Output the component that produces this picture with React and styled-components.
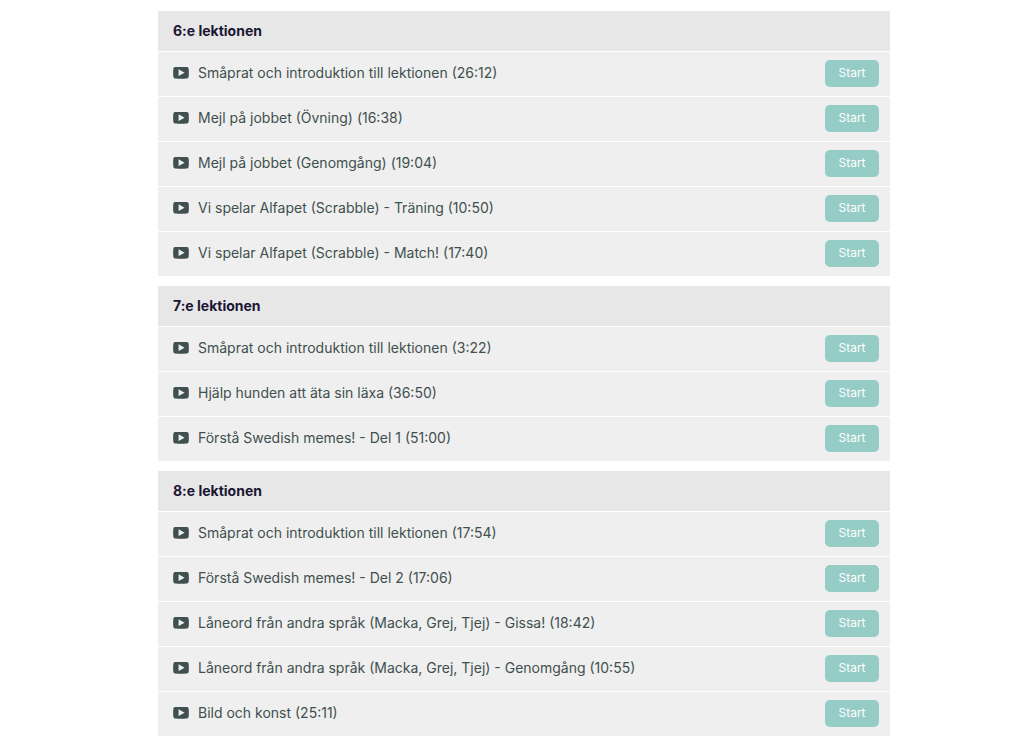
import styled, { createGlobalStyle } from 'styled-components';

const sections = [
  {
    title: '6:e lektionen',
    lectures: [
      'Småprat och introduktion till lektionen (26:12)',
      'Mejl på jobbet (Övning) (16:38)',
      'Mejl på jobbet (Genomgång) (19:04)',
      'Vi spelar Alfapet (Scrabble) - Träning (10:50)',
      'Vi spelar Alfapet (Scrabble) - Match! (17:40)',
    ],
  },
  {
    title: '7:e lektionen',
    lectures: [
      'Småprat och introduktion till lektionen (3:22)',
      'Hjälp hunden att äta sin läxa (36:50)',
      'Förstå Swedish memes! - Del 1 (51:00)',
    ],
  },
  {
    title: '8:e lektionen',
    lectures: [
      'Småprat och introduktion till lektionen (17:54)',
      'Förstå Swedish memes! - Del 2 (17:06)',
      'Låneord från andra språk (Macka, Grej, Tjej) - Gissa! (18:42)',
      'Låneord från andra språk (Macka, Grej, Tjej) - Genomgång (10:55)',
      'Bild och konst (25:11)',
    ],
  },
];

function VideoIcon() {
  return (
    <Icon viewBox="0 0 16 12" aria-hidden="true">
      <path
        fillRule="evenodd"
        d="M2 0 C5 -0.3 11 -0.3 14 0 Q15.5 0.2 15.7 2 Q16 5.8 15.7 9.6 Q15.5 11.4 14 11.5 C11 11.8 5 11.8 2 11.5 Q0.5 11.4 0.3 9.6 Q0 5.8 0.3 2 Q0.5 0.2 2 0 Z M5.6 2.3 V9.1 L11.6 5.7 Z"
      />
    </Icon>
  );
}

function App() {
  return (
    <>
      <GlobalStyle />
      <Page>
        {sections.map((section) => (
          <Section key={section.title}>
            <SectionTitle>{section.title}</SectionTitle>
            <LectureList>
              {section.lectures.map((lecture) => (
                <Lecture key={lecture}>
                  <LectureLink href="#">
                    <VideoIcon />
                    <span>{lecture}</span>
                  </LectureLink>
                  <StartButton type="button">Start</StartButton>
                </Lecture>
              ))}
            </LectureList>
          </Section>
        ))}
      </Page>
    </>
  );
}

export default App;

const GlobalStyle = createGlobalStyle`
  * {
    box-sizing: border-box;
  }

  body {
    margin: 0;
    background: #fff;
    font-family: Inter, sans-serif;
  }
`;

const Page = styled.main`
  display: flex;
  flex-direction: column;
  gap: 10px;
  padding: 11px 134px 0 158px;
`;

const Section = styled.section`
  background: #efefef;
`;

const SectionTitle = styled.h2`
  margin: 0;
  padding: 0 15px;
  background: #e7e7e7;
  color: #1a1633;
  font-size: 14px;
  font-weight: 700;
  line-height: 40px;
`;

const LectureList = styled.ul`
  margin: 0;
  padding: 0;
  list-style: none;
`;

const Lecture = styled.li`
  display: flex;
  align-items: center;
  justify-content: space-between;
  min-height: 45px;
  padding: 0 11px 2px 15px;
  border-top: 1px solid #fff;
`;

const LectureLink = styled.a`
  display: flex;
  align-items: center;
  gap: 9px;
  color: #3f504e;
  font-size: 14px;
  line-height: 20px;
  text-decoration: none;
`;

const Icon = styled.svg`
  flex: none;
  width: 16px;
  height: 12px;
  fill: #3f504e;
`;

const StartButton = styled.button`
  flex: none;
  width: 54px;
  height: 27px;
  padding: 0;
  border: 0;
  border-radius: 5px;
  background: #95ccc5;
  color: #fff;
  font-family: inherit;
  font-size: 12px;
  line-height: 20px;
  cursor: pointer;
`;
